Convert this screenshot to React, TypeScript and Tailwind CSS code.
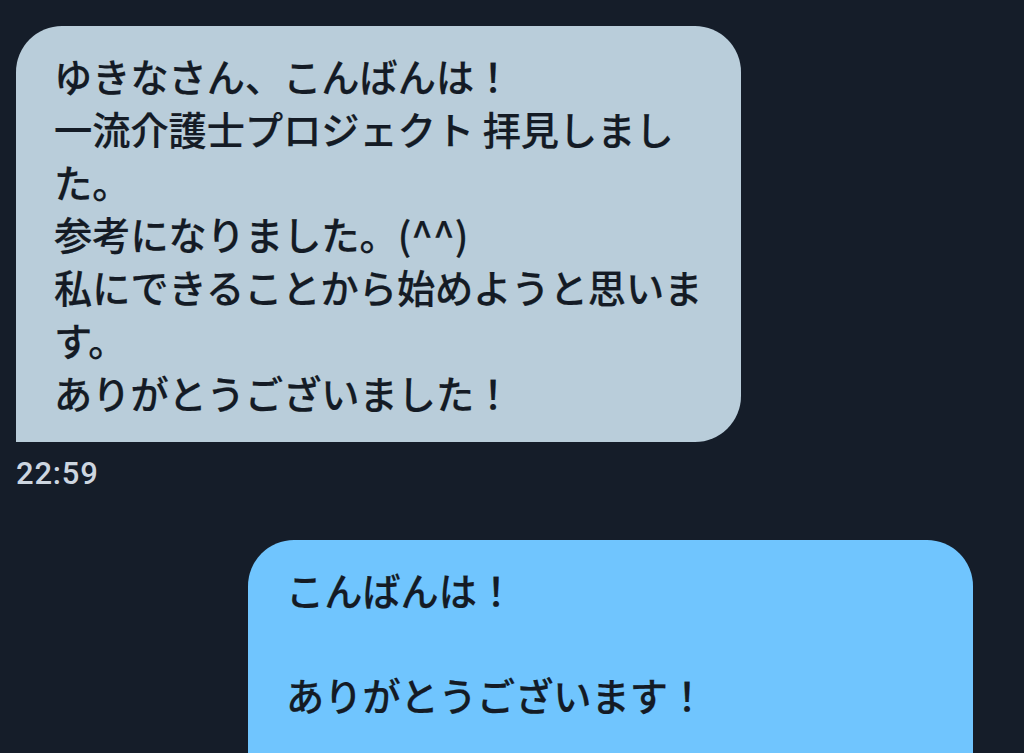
const jp = "font-['Hiragino_Sans','Noto_Sans_CJK_JP',sans-serif]";

function Bubble({ lines, side }: { lines: string[]; side: "in" | "out" }) {
  const tone =
    side === "in"
      ? "bg-[#b9cdda] rounded-[46px] rounded-bl-none"
      : "bg-[#70c5fe] rounded-[46px] rounded-br-none";
  return (
    <div className={`w-[725px] pl-[38px] pr-[20px] pt-[24px] pb-[22px] ${tone}`}>
      {lines.map((l, i) => (
        <div
          key={i}
          className={`${jp} h-[52.8px] whitespace-nowrap text-[38.2px] font-medium leading-[52.8px] text-[#141b25] [-webkit-text-stroke:0.2px_#141b25]`}
        >
          {l || "\u00a0"}
        </div>
      ))}
    </div>
  );
}

export default function App() {
  return (
    <div className="h-[753px] w-[1024px] overflow-hidden bg-[#151d29]">
      <div className="pl-4 pt-[26px]">
        <Bubble
          side="in"
          lines={[
            "ゆきなさん、こんばんは！",
            "一流介護士プロジェクト 拝見しまし",
            "た。",
            "参考になりました。(^^)",
            "私にできることから始めようと思いま",
            "す。",
            "ありがとうございました！",
          ]}
        />
        <div className="mt-[14px] font-['Roboto',sans-serif] text-[31px] font-medium leading-[36px] tracking-[0.8px] text-[#cdd6e0]">
          22:59
        </div>
      </div>
      <div className="mt-[48px] flex justify-end pr-[51px]">
        <Bubble side="out" lines={["こんばんは！", "", "ありがとうございます！", "", ""]} />
      </div>
    </div>
  );
}
